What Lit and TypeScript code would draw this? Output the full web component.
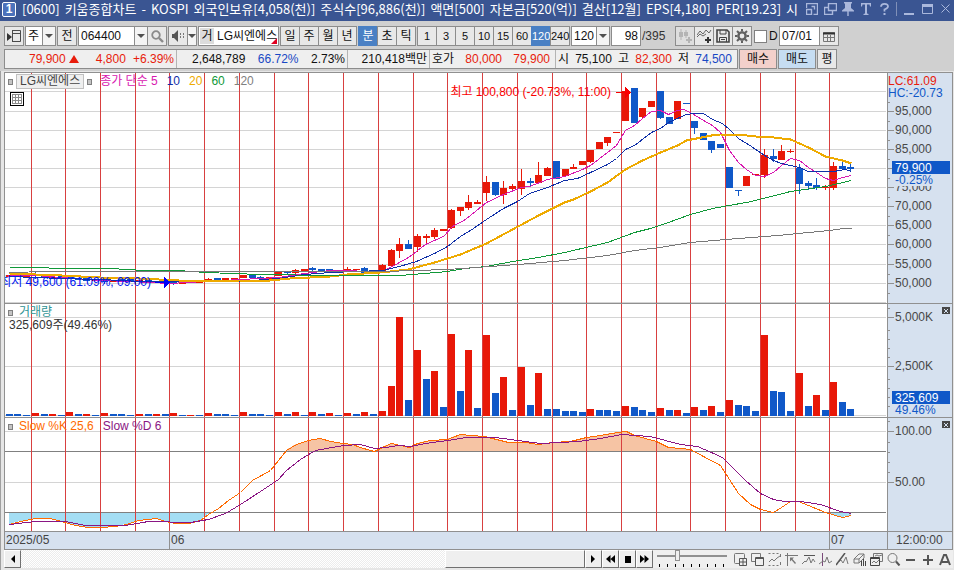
import { LitElement, html, css, svg, nothing } from "lit";
import { customElement, property, state } from "lit/decorators.js";
import { classMap } from "lit/directives/class-map.js";

/* ---------- chart data ---------- */

const DAY_LINES = [
  31, 65, 100, 135, 169, 204, 239, 274, 308, 343, 378, 413, 447, 482, 517, 552,
  586, 621, 656, 690, 725, 760, 795, 829,
];
const SLOTS = [4, 13, 21, 30];
const CENTERS = [-4, ...DAY_LINES]
  .flatMap((x) => SLOTS.map((s) => x + s))
  .slice(1);

type Side = "r" | "b";
type Candle = [Side, number, number, number?, number?];

// side, body top, body bottom, wick top, wick bottom
const CANDLES: Candle[] = [
  ["r", 275, 277], ["b", 274, 276], ["r", 275, 277],
  ["b", 274, 276, 271, 279], ["b", 275, 278], ["r", 277, 278], ["b", 276, 278],
  ["b", 277, 279], ["b", 278, 280], ["b", 278, 281], ["r", 279, 281],
  ["b", 278, 282, 277, 284], ["r", 280, 282], ["b", 279, 281], ["b", 279, 281],
  ["r", 280, 282], ["b", 280, 282], ["b", 281, 282], ["b", 281, 283],
  ["b", 282, 284, 281, 285], ["r", 282, 284], ["b", 282, 283], ["r", 281, 283],
  ["r", 279, 281, 278, 282], ["b", 278, 280], ["r", 278, 280], ["r", 278, 280],
  ["r", 275, 278], ["b", 275, 278], ["b", 277, 278, 276, 279], ["r", 277, 279],
  ["r", 272, 276, 271, 276], ["b", 272, 273, 271, 274], ["r", 270, 273, 269, 274], ["r", 269, 271],
  ["b", 268, 270, 267, 272], ["b", 269, 271], ["b", 269, 272], ["r", 270, 272],
  ["r", 269, 271, 267, 271], ["r", 269, 270], ["b", 268, 273, 267, 274], ["b", 272, 273],
  ["r", 265, 273, 264, 273], ["r", 250, 266, 249, 267], ["r", 244, 251, 238, 258], ["b", 244, 249, 240, 249],
  ["r", 236, 247, 234, 252], ["r", 236, 238, 234, 243], ["r", 230, 237, 228, 239], ["r", 229, 231],
  ["r", 210, 228, 209, 229], ["r", 207, 211, 207, 216], ["r", 202, 208, 195, 210], ["r", 202, 204, 200, 204],
  ["r", 182, 193, 176, 201], ["b", 182, 195, 182, 196], ["r", 188, 195, 181, 204], ["r", 186, 189, 184, 190],
  ["r", 181, 189, 169, 195], ["b", 181, 183, 178, 187], ["r", 175, 183, 162, 183], ["r", 168, 176, 167, 176],
  ["b", 161, 179], ["r", 169, 176], ["r", 167, 169, 164, 169], ["r", 161, 165],
  ["r", 150, 162, 150, 163], ["r", 142, 149], ["r", 137, 143, 137, 146], ["r", 132, 133],
  ["r", 91, 121], ["b", 88, 123], ["r", 108, 117, 108, 119], ["r", 101, 107],
  ["b", 91, 118, 91, 119], ["b", 117, 124], ["r", 101, 119], ["b", 103, 104],
  ["b", 121, 128, 121, 134], ["b", 133, 140], ["b", 141, 150, 141, 153], ["b", 144, 148],
  ["b", 167, 188], ["b", 190, 191, 190, 196], ["r", 176, 186], ["r", 174, 175],
  ["r", 155, 175, 149, 178], ["b", 156, 159, 149, 162], ["r", 151, 160, 145, 160], ["r", 151, 152, 149, 153],
  ["b", 168, 184, 164, 194], ["b", 183, 186, 181, 190], ["b", 185, 188, 178, 190], ["r", 187, 188, 185, 190],
  ["r", 166, 188, 162, 190], ["b", 166, 169, 159, 169], ["b", 167, 169, 163, 171],
];

// volume bars: side and top edge
const VOLUME = (
  "b414 b414 b415 r413 b414 r414 b415 r412 b414 r414 b415 r413 b414 b414 b415 " +
  "r414 b414 r414 b414 r413 b415 r415 b415 r413 b414 b414 b415 r412 b414 b414 b415 " +
  "r412 b414 r412 b415 r412 b414 r413 b415 r413 b414 r412 b414 r411 r386 r317 b400 " +
  "r350 b379 r371 b407 r334 b391 r350 b408 r335 b393 r377 b410 r367 b405 r373 b409 " +
  "b409 b411 b411 b412 r409 b410 b410 b411 r406 b407 b410 b412 r408 b410 r410 b413 " +
  "r407 b410 r406 b412 r400 b405 b406 b411 r335 b391 b392 b411 r373 b406 r395 b410 " +
  "r382 b402 b409"
).split(" ");

const MA5 =
  "9,275 35,275 61,277 100,280 130,281 169,283 204,281 239,279 260,278 278,277 304,273 330,270 382,271 399,262 408,257 425,244 434,240 443,236 452,226 465,219 486,202 503,194 521,187 529,186 547,179 564,176 582,169 590,165 607,152 616,145 625,130 634,125 642,118 651,111 660,110 668,114 677,110 683,109 690,112 703,120 712,125 720,132 729,150 738,162 746,169 755,175 764,176 773,172 781,165 790,158 799,160 808,167 816,172 825,178 833,180 842,177 851,175";
const MA10 =
  "9,276 61,278 100,279 140,281 170,281 239,281 278,278 304,274 330,272 382,270 399,266 416,261 434,253 447,246 460,236 473,228 486,219 503,208 517,201 529,193 547,187 564,180 577,178 590,172 607,164 616,158 625,149 634,145 651,132 660,128 668,122 677,118 686,114 694,113 703,113 712,119 722,123 729,129 738,138 751,146 764,155 773,160 781,163 799,167 808,171 833,171 845,169 851,171";
const MA20 =
  "9,273 35,274 61,275 100,277 139,278 178,280 204,281 239,280 269,280 290,278 310,277 330,276 347,274 380,272 408,269 434,262 460,254 486,243 512,229 538,215 564,202 573,199 590,191 607,182 625,169 642,160 660,152 677,145 686,140 711,135 720,134 738,134 755,136 773,137 790,139 808,147 825,156 842,160 851,163";
const MA60 =
  "9,267 48,267 49,268 118,268 119,269 152,270 178,270 205,272 260,274 330,275 400,275 447,271 464,268 486,266 512,261 538,257 564,252 607,242 634,232 650,228 668,222 690,214 712,208 751,201 790,191 825,186 851,180";
const MA120 =
  "9,272 48,271 240,271 382,271 447,269 490,266 530,263 564,260 607,255 634,250 660,247 690,242 725,239 777,235 829,230 843,228 851,228";
const SLOW_K =
  "9,524 20,521 35,518 50,518 61,521 75,525 88,527 100,527 115,526 126,524 138,520 156,518 165,521 175,523 188,523 200,520 208,514 218,508 228,500 240,492 252,480 270,470 286,450 296,444 308,440 320,438 330,441 343,443 352,444 360,447 370,450 374,451 382,447 391,443 400,445 409,447 417,443 430,440 447,439 460,434 470,435 484,436 492,438 508,442 525,442 538,444 552,442 570,441 586,437 600,435 617,432 626,431 634,435 656,441 668,447 680,448 690,449 703,456 720,465 729,479 738,493 750,504 760,509 773,512 781,507 790,501 798,501 808,505 825,512 842,517 851,515";
const SLOW_D =
  "9,524 35,521 65,521 85,525 125,525 148,521 190,522 208,519 225,513 240,504 260,491 278,479 286,470 300,459 315,450 343,445 360,444 374,448 385,447 398,445 410,446 425,443 447,440 466,437 495,437 525,441 540,443 578,441 600,438 621,434 650,436 680,444 697,446 711,452 722,457 730,465 745,480 760,493 773,499 784,501 800,501 820,504 840,511 851,513";

const PLOT_X = 5;
const PLOT_W = 882;
const AXIS_W = 65;

interface Label {
  y: number;
  text: string;
}
interface Panel {
  top: number;
  height: number;
  labels: Label[];
  minor: number[];
}

const PRICE: Panel = {
  top: 73,
  height: 230,
  labels: [95, 90, 85, 80, 75, 70, 65, 60, 55, 50].map((v, i) => ({
    y: [111, 130, 149, 168, 187, 206, 225, 244, 264, 283][i],
    text: v === 80 ? "" : `${v},000`,
  })),
  minor: [102, 121, 140, 159, 178, 197, 216, 235, 254, 274, 293],
};
const VOL: Panel = {
  top: 304,
  height: 113,
  labels: [{ y: 317, text: "5,000K" }, { y: 366, text: "2,500K" }],
  minor: [308, 330, 339, 348, 357, 379, 388, 397, 406],
};
const SLOW: Panel = {
  top: 418,
  height: 113,
  labels: [{ y: 431, text: "100.00" }, { y: 482, text: "50.00" }],
  minor: [421, 442, 452, 462, 472],
};

/* ---------- icons ---------- */

const icon = (w: number, h: number, body: unknown) =>
  html`<svg class="icon" width=${w} height=${h} viewBox="0 0 ${w} ${h}" fill="none" stroke="currentColor" aria-hidden="true">${body}</svg>`;

const I = {
  panel: icon(14, 14, svg`<path d="M5 1.500H13.500V12.500H5M5.500 1V13M5.500 4.500H13.500" stroke="#4a4a4a"/><path d="M0 4L5 8L0 12Z" fill="#333" stroke="none"/>`),
  search: icon(13, 13, svg`<circle cx="5" cy="5" r="3.800" stroke="#8a8a8a" stroke-width="1.800"/><path d="M8 8L12 12" stroke="#8a8a8a" stroke-width="2.400"/>`),
  speaker: icon(12, 12, svg`<path d="M0 4H2L6 0V12L2 8H0Z" fill="#555" stroke="none"/><path d="M8 4H9M11 4H12M8 7H9M11 7H12" stroke="#777" stroke-width="2"/>`),
  candles: icon(15, 14, svg`<path d="M3 0V11M8 1V9" stroke="#b4b4b4"/><path d="M1 3H5V8H1ZM6 3H10V7H6Z" fill="#b4b4b4" stroke="none"/><path d="M8 11H14M11 8V14" stroke="#b4b4b4" stroke-width="2"/>`),
  waves: icon(15, 14, svg`<path d="M0 6L3 2L6 5L9 1L12 4L14 1M0 8L3 5L6 7L9 5" stroke="#666"/><path d="M8 11H14M11 8V14" stroke="#333" stroke-width="2"/>`),
  disk: icon(14, 14, svg`<path d="M1 1H11L13 3V13H1Z" stroke="#444" stroke-width="1.600"/><path d="M4 1V5H10V1M3.500 13V8.500H10.500V13M5 10.500H9" stroke="#444"/>`),
  gear: icon(14, 14, svg`<circle cx="7" cy="7" r="3.600" stroke="#606060" stroke-width="2.400"/><path d="M7 0V2.500M7 11.500V14M0 7H2.500M11.500 7H14M2 2L4 4M10 10L12 12M2 12L4 10M10 4L12 2" stroke="#606060" stroke-width="2"/>`),
  calendar: icon(12, 11, svg`<path d="M.5 1.500H11.500V10.500H.5ZM.5 6.500H11.500M4.500 4V10M7.500 4V10" stroke="#777"/><path d="M0 2.500H12" stroke="#333" stroke-width="2"/>`),
  corner: icon(12, 12, svg`<path d="M.5 5V.5H11.500V11.500H7.500M.5 6.500H5.500V11.500H.5ZM5.500 3.500H8.500V6.500" stroke-width="1.400"/>`),
  windows: icon(13, 12, svg`<path d="M4.500 .5H12.500V7.500H4.500ZM4.500 4.500H.5V11.500H8.500V7.500" stroke-width="1.400"/>`),
  pin: icon(12, 14, svg`<path d="M2 0H10V1.500H9V6L12 8.500V9.500H0V8.500L3 6V1.500H2ZM5.300 9H6.700V14H5.300Z" fill="currentColor" stroke="none"/>`),
  tee: icon(10, 12, svg`<path d="M0 0H10V3.500H9L8.500 1.500H6V10.500L7.500 11V12H2.500V11L4 10.500V1.500H1.500L1 3.500H0Z" fill="currentColor" stroke="none"/>`),
  help: icon(9, 12, svg`<path d="M1 3.800Q1 .9 4.500 .9Q8 .9 8 3.500Q8 5.200 4.500 6.500V8.500" stroke-width="1.800"/><path d="M3.500 10H5.500V12H3.500Z" fill="currentColor" stroke="none"/>`),
  min: icon(10, 12, svg`<path d="M0 11H10" stroke-width="2"/>`),
  max: icon(11, 10, svg`<path d="M.5 .5H10.500V9.500H.5Z"/><path d="M0 1.500H11" stroke-width="3"/>`),
  close: icon(9, 10, svg`<path d="M.5 .5L8.500 8.500M8.500 .5L.5 8.500"/>`),
  left: icon(5, 8, svg`<path d="M5 0V8L1 4Z" fill="#000" stroke="none"/>`),
  right: icon(5, 8, svg`<path d="M0 0V8L4 4Z" fill="#000" stroke="none"/>`),
  back: icon(9, 8, svg`<path d="M4.500 0V8L0 4ZM9 0V8L4.500 4Z" fill="#000" stroke="none"/>`),
  stop: icon(6, 7, svg`<path d="M0 0H6V7H0Z" fill="#000" stroke="none"/>`),
  fwd: icon(9, 8, svg`<path d="M0 0V8L4.500 4ZM4.500 0V8L9 4Z" fill="#000" stroke="none"/>`),
  grid: icon(10, 10, svg`<path d="M.5 .5H9.500V9.500H.5ZM.5 3.500H9.500M.5 6.500H9.500M3.500 .5V9.500M6.500 .5V9.500" stroke="#8a8a8a"/>`),
};

const TOOLS: [string, unknown][] = [
  ["새 창 추가", svg`<path d="M5 10.500H1.500Q.5 10.500 .5 9.500V1.500Q.5 .5 1.500 .5H9.500Q10.500 .5 10.500 1.500V5"/><path d="M5.500 5.500H12.500V12.500H5.500ZM9 5.500V12.500M5.500 9H12.500" stroke="#555"/>`],
  ["창 겹치기", svg`<path d="M4.500 8.500H.5V.5H9.500V4"/><path d="M4.500 4.500H12.500V12.500H4.500ZM4.500 5.500H12.500" stroke="#555"/>`],
  ["영역 차트", svg`<path d="M.5 .5H12.500M.5 12.500H12.500" stroke-dasharray="2 2"/><path d="M1 9L4 6L6 8L9 5L12 3"/><path d="M12.500 1V4M12.500 9V12"/>`],
  ["선택 도구", svg`<path d="M0 2.500H13M2.500 0V13"/><path d="M5 4.500H9L7.500 6L11 10L10 11L6.500 7L5 8.500Z" fill="currentColor" stroke="none"/>`],
  ["수평선", svg`<path d="M2 2.500H13" stroke="#555"/><path d="M0 11L3 8L4 9L7 4L9 10L11 6L13 9"/>`],
  ["수직선", svg`<path d="M3.500 0V13" stroke="#7a4a7a"/><path d="M0 11L4 8L6 9L8 4L10 10L13 8"/>`],
  ["추세선", svg`<path d="M0 12L9 0" stroke="#555" stroke-width="1.500"/><path d="M2 10L5 7L7 10L10 4L12 11"/>`],
  ["지우개", svg`<path d="M1 6L6 1H11L6 6ZM1 6V10H6V6M6 10L11 5V1"/><path d="M8.500 8V13M10.500 6V13M12.500 8V13" stroke="#444"/>`],
  ["다중 차트", svg`<path d="M3.500 4V.5H12.500V8.500H10"/><path d="M.5 4.500H9.500V12.500H.5ZM.5 5.500H9.500" stroke="#444"/><path d="M2 10L4 8L6 10L9 7M5 3L7 2L9 3L12 2"/>`],
  ["돋보기", svg`<circle cx="5.500" cy="5" r="4.500"/><path d="M9 8.500L12.500 12.500" stroke="#555" stroke-width="2"/>`],
  ["축소", svg`<path d="M2 7H11" stroke="#555" stroke-width="2"/>`],
  ["확대", svg`<path d="M2 7H12M7 2V12" stroke="#555" stroke-width="2"/>`],
  ["글자", svg`<path d="M2 12L6 2H8L12 12M4 9H10" stroke="#555" stroke-width="2"/>`],
];

/* ---------- plot ---------- */

@customElement("stock-chart")
export class StockChart extends LitElement {
  static styles = css`
    :host { display: block; border: 1px solid #909090; background: #fff; color: #444; }
    .row { display: flex; border-bottom: 1px solid #909090; }
    .row:last-child { border-bottom: 0; }
    .plot { position: relative; flex: 1; min-width: 0; overflow: hidden; }
    .plot svg, .axis svg { display: block; shape-rendering: crispEdges; }
    .plot > svg { width: 100%; }
    .axis { position: relative; flex: none; width: 65px; background: #d6e1ef; }
    .axis text { font-size: 12px; fill: #484848; }
    .axis .lead { fill: #fff; }
    .axis .up { fill: #e81c0c; }
    .axis .down { fill: #1058c8; }
    .legend { position: absolute; left: 3px; top: 1px; display: flex; align-items: center; gap: 6px; height: 15px; line-height: 15px; white-space: nowrap; }
    .box { width: 5px; height: 6px; box-sizing: border-box; border: 1px solid #808080; background: #c4c4c4; }
    .chip { border: 1px solid #c0c0c0; background: #efefef; padding: 0 3px; line-height: 13px; margin: 0 -3px; }
    .mas { display: flex; gap: 9px; padding-left: 2px; }
    .ma5 { color: #d818b0; }
    .ma10 { color: #1030a8; }
    .ma20 { color: #eeaa00; }
    .ma60 { color: #109838; }
    .ma120 { color: #808080; }
    .vol { color: #2e9494; }
    .k { color: #ff6a00; }
    .d { color: #8a1684; padding-left: 3px; }
    .amount { position: absolute; left: 4px; top: 14px; line-height: 15px; color: #333; }
    .note { position: absolute; line-height: 14px; white-space: nowrap; }
    .note.high { top: 12px; color: #fa0000; }
    .note.low { top: 202px; color: #0018f0; }
    .gridbtn { position: absolute; left: 5px; top: 19px; width: 14px; height: 14px; padding: 0; border: 1px solid #000; background: #fff; display: grid; place-items: center; }
    .shut { position: absolute; right: 2px; top: 3px; width: 8px; height: 7px; padding: 0; border: 0; background: #484848; color: #d6e1ef; display: grid; place-items: center; }
    .time { background: #d6e1ef; height: 17px; line-height: 16px; font-size: 12px; }
    .month { position: absolute; top: 0; height: 17px; padding-left: 1px; border-left: 1px solid #909090; }
    .month.first { border-left: 0; }
    .clock { border-left: 1px solid #909090; box-sizing: border-box; padding-left: 8px; }
  `;

  private frame(p: Panel, body: unknown) {
    return html`<svg
      height=${p.height}
      viewBox="${PLOT_X} ${p.top} ${PLOT_W} ${p.height}"
      preserveAspectRatio="none"
      aria-hidden="true"
    >${body}</svg>`;
  }

  private hlines(ys: number[], color = "#d4d4d4") {
    return ys.map((y) => svg`<rect x="5" y=${y} width="881" height="1" fill=${color}></rect>`);
  }

  private days(p: Panel) {
    return DAY_LINES.map((x) => svg`<rect x=${x} y=${p.top} width="1" height=${p.height} fill="#d84040"></rect>`);
  }

  private line(points: string, color: string, width = 1) {
    return svg`<polyline points=${points} transform="translate(.5 .5)" fill="none" stroke=${color} stroke-width=${width}></polyline>`;
  }

  private fill(side: string) {
    return side === "r" ? "#e81808" : "#1058c8";
  }

  private axis(p: Panel, extra: unknown, closable = true) {
    return html`<div class="axis">
      <svg width=${AXIS_W} height=${p.height} viewBox="887 ${p.top} ${AXIS_W} ${p.height}">
        <rect x="887" y=${p.top} width="1" height=${p.height} fill="#909090"></rect>
        ${p.minor.map((y) => svg`<rect x="888" y=${y} width="2" height="1" fill="#909090"></rect>`)}
        ${p.labels.map((l) => svg`
          <rect x="888" y=${l.y} width="6" height="1" fill="#909090"></rect>
          <text x="895" y=${l.y + 4}>${l.text}</text>`)}
        ${extra}
      </svg>
      ${closable
        ? html`<button class="shut" aria-label="닫기"><svg width="4" height="4" viewBox="0 0 4 4" stroke="currentColor"><path d="M0 0L4 4M4 0L0 4"></path></svg></button>`
        : nothing}
    </div>`;
  }

  private rightOf(x: number) {
    return `right:${((PLOT_X + PLOT_W - x) / PLOT_W) * 100}%`;
  }
  private leftOf(x: number) {
    return `left:${((x - PLOT_X) / PLOT_W) * 100}%`;
  }

  render() {
    return html`
      <div class="row">
        <div class="plot">
          ${this.frame(PRICE, svg`
            ${this.hlines([91, 111, 130, 149, 168, 187, 206, 225, 244, 264, 283, 302])}
            ${this.days(PRICE)}
            ${CANDLES.map(([s, t, b, wt, wb], i) => svg`
              <rect x=${CENTERS[i] - 3} y=${t} width="7" height=${b - t} fill=${this.fill(s)}></rect>
              ${wt === undefined ? nothing : svg`<rect x=${CENTERS[i]} y=${wt} width="1" height=${wb! - wt} fill=${this.fill(s)}></rect>`}`)}
            ${this.line(MA5, "#d818b0")}
            ${this.line(MA10, "#1030a8")}
            ${this.line(MA20, "#eeaa00", 2)}
            ${this.line(MA60, "#109838")}
            ${this.line(MA120, "#787878")}
            <path d="M616 92H625V87L631 92.500L625 98V93H616Z" fill="#fa0000"></path>
            <path d="M155 282H164V277L170 282.500L164 288V283H155Z" fill="#0000f8"></path>`)}
          <div class="legend">
            <span class="box"></span><span class="chip">LG씨엔에스</span><span class="box"></span>
            <span class="mas">
              <span class="ma5">종가 단순 5</span><span class="ma10">10</span><span class="ma20">20</span><span class="ma60">60</span><span class="ma120">120</span>
            </span>
          </div>
          <button class="gridbtn" aria-label="데이터 표">${I.grid}</button>
          <span class="note high" style=${this.rightOf(611)}>최고 100,800 (-20.73%, 11:00)</span>
          <span class="note low" style=${this.rightOf(151)}>최저 49,600 (61.09%, 09:00)</span>
        </div>
        ${this.axis(PRICE, svg`
          <text class="up" x="888" y="85">LC:61.09</text>
          <text class="down" x="888" y="97">HC:-20.73</text>
          <rect x="892" y="161" width="58" height="13" fill="#1058c8"></rect>
          <text class="lead" x="895" y="172">79,900</text>
          <rect x="894" y="174" width="56" height="12" fill="#d6e1ef"></rect>
          <text class="down" x="895" y="184">-0.25%</text>`, false)}
      </div>
      <div class="row">
        <div class="plot">
          ${this.frame(VOL, svg`
            ${this.hlines([317, 366, 415])}
            ${this.days(VOL)}
            ${VOLUME.map((v, i) => {
              const top = Number(v.slice(1));
              return svg`<rect x=${CENTERS[i] - 3} y=${top} width="7" height=${416 - top} fill=${this.fill(v[0])}></rect>`;
            })}`)}
          <div class="legend"><span class="box"></span><span class="vol">거래량</span></div>
          <span class="amount">325,609주(49.46%)</span>
        </div>
        ${this.axis(VOL, svg`
          <rect x="892" y="391" width="58" height="13" fill="#1058c8"></rect>
          <text class="lead" x="895" y="402">325,609</text>
          <text class="down" x="895" y="414">49.46%</text>`)}
      </div>
      <div class="row">
        <div class="plot">
          ${this.frame(SLOW, svg`
            <clipPath id="over"><rect x="5" y="418" width="882" height="33"></rect></clipPath>
            <clipPath id="under"><rect x="5" y="513" width="882" height="18"></rect></clipPath>
            ${this.hlines([431, 482])}
            <polygon points="9,451 ${SLOW_K} 851,451" fill="#f6c4a4" clip-path="url(#over)"></polygon>
            <polygon points="9,513 ${SLOW_K} 851,513" fill="#a4def4" clip-path="url(#under)"></polygon>
            ${this.hlines([451, 512], "#808080")}
            ${this.days(SLOW)}
            ${this.line(SLOW_K, "#ff6a00")}
            ${this.line(SLOW_D, "#8a1684")}`)}
          <div class="legend"><span class="box"></span><span class="k">Slow %K 25,6</span><span class="d">Slow %D 6</span></div>
        </div>
        ${this.axis(SLOW, nothing)}
      </div>
      <div class="row time">
        <div class="plot">
          <span class="month first" style=${this.leftOf(5)}>2025/05</span>
          <span class="month" style=${this.leftOf(169)}>06</span>
          <span class="month" style=${this.leftOf(829)}>07</span>
        </div>
        <div class="axis clock">12:00:00</div>
      </div>
    `;
  }
}

/* ---------- window ---------- */

@customElement("app-root")
export class AppRoot extends LitElement {
  @property() code = "064400";
  @state() private unit = "분";
  @state() private minutes = "120";

  static styles = css`
    :host { display: flex; flex-direction: column; min-height: 100vh; box-sizing: border-box; background: #d0d0d0; color: #111; font: 12px/14px "Liberation Sans", "Noto Sans CJK KR", sans-serif; }
    * { box-sizing: border-box; }
    button, input, select { font: inherit; color: inherit; border-radius: 0; margin: 0; }
    button { display: grid; place-items: center; padding: 0; border: 1px solid #8c8c8c; background: #e8e8e8; white-space: nowrap; line-height: 16px; }
    .icon { display: block; }
    .title { display: flex; align-items: center; height: 21px; padding: 0 0 3px 2px; background: #3a5592; color: #fff; }
    .badge { flex: none; width: 14px; height: 15px; margin-right: 6px; border: 1px solid #fff; border-radius: 2px; background: #4c72bc; display: grid; place-items: center; font-weight: bold; line-height: 12px; }
    .caption { flex: 1; min-width: 0; display: flex; gap: 5px; overflow: hidden; white-space: nowrap; font: 13px/18px "Noto Sans CJK KR", sans-serif; margin: 0; }
    .sys { flex: none; display: flex; align-items: center; color: #aab8dc; }
    .sys button { width: 18px; height: 18px; border: 0; background: none; }
    .sep { width: 1px; height: 14px; margin: 0 3px; background: #8090b8; }
    .tools { display: flex; gap: 1px; padding: 5px 4px 3px; height: 28px; }
    .tools > * { flex: none; }
    .group { display: flex; height: 20px; }
    .group button { width: 20px; height: 20px; }
    .group > * + * { margin-left: -1px; }
    .minutes { font-size: 11px; }
    .tools .on { background: #4a80c4; border-color: #4a80c4; color: #fff; }
    .sq { width: 20px; height: 20px; }
    .group .dim { background: #dedede; }
    .arrow::before { content: ""; border: 4px solid transparent; border-top: 4px solid #505050; border-bottom: 0; }
    .group .arrow { width: 14px; background: #f4f4f4; }
    .group .slim { width: 10px; }
    .field { height: 20px; border: 1px solid #8c8c8c; background: #fff; padding: 0 2px; }
    select.field { appearance: none; }
    .w-unit { width: 18px; }
    .w-code { width: 57px; }
    .w-min { width: 26px; }
    .w-pos { width: 30px; text-align: right; }
    .w-date { width: 41px; }
    .stock { position: relative; display: flex; align-items: center; gap: 3px; width: 81px; height: 20px; border: 1px solid #8c8c8c; background: #fff; padding-left: 1px; white-space: nowrap; overflow: hidden; }
    .stock::after { content: ""; position: absolute; right: 1px; bottom: 1px; border: 3px solid #e00020; border-top-color: transparent; border-left-color: transparent; }
    .tag { width: 14px; background: #dcdcdc; line-height: 16px; text-align: center; }
    .total { width: 32px; line-height: 20px; color: #333; }
    .check { display: flex; align-items: center; gap: 2px; height: 20px; width: 25px; padding-left: 1px; }
    .check input { appearance: none; flex: none; width: 13px; height: 13px; border: 1px solid #808080; background: #fff; }
    .quote { display: flex; gap: 1px; padding: 0 4px; height: 20px; }
    .cells { display: flex; width: 734px; border: 1px solid #8c8c8c; background: #efefef; line-height: 18px; white-space: nowrap; }
    .cell { display: flex; justify-content: space-between; align-items: center; border-right: 1px solid #b4b4b4; padding: 0 2px; }
    .cell:last-child { border-right: 0; }
    .c1 { width: 172px; padding-left: 24px; gap: 2px; }
    .c2 { width: 171px; padding-left: 15px; }
    .c3 { width: 82px; justify-content: flex-end; }
    .c4 { width: 126px; padding-right: 5px; }
    .c5 { flex: 1; padding-right: 5px; }
    .up { color: #e81c0c; }
    .down { color: #1848c4; }
    .tri { width: 0; height: 0; border: 5px solid transparent; border-top: 0; border-bottom: 8px solid #e81c0c; margin-right: 10px; }
    .price { display: flex; align-items: center; gap: 3px; }
    .quote button { width: 38px; height: 20px; }
    .quote .buy { background: #f3d0cb; }
    .quote .sell { background: #c6ddf2; }
    .quote .avg { width: 20px; }
    .body { flex: 1; display: flex; flex-direction: column; margin-top: 2px; padding: 1px 1px 0 4px; background: #e6e6e6; box-shadow: inset 1px 0 #a0a0a0; }
    .foot { display: flex; height: 18px; background: #efefef; }
    .foot button { border: 1px solid; border-color: #fff #707070 #707070 #fff; background: #efefef; height: 18px; width: 17px; flex: none; }
    .track { flex: 1; display: flex; justify-content: flex-end; background: repeating-conic-gradient(#fff 0 25%, #ececec 0 50%) 0 0 / 2px 2px; }
    .thumb { width: 140px; border: 1px solid; border-color: #fff #707070 #707070 #fff; background: #efefef; }
    .zoom { appearance: none; flex: none; width: 70px; height: 17px; margin: 0 5px 0 4px; background:
      linear-gradient(#909090, #909090) 0 5px / 100% 2px no-repeat,
      repeating-linear-gradient(90deg, #000 0 1px, transparent 1px 8px) 2px 14px / 67px 3px no-repeat; }
    .zoom::-webkit-slider-thumb { appearance: none; width: 5px; height: 11px; margin-top: -6px; border: 1px solid #909090; background: #efefef; }
    .set { display: flex; flex: none; color: #777; }
    .set button { border: 0; background: none; width: 17px; }
    .base { height: 3px; }
  `;

  private btn(label: string, glyph: unknown, cls = "") {
    return html`<button class=${cls} aria-label=${label}>${glyph}</button>`;
  }

  render() {
    const caption = [
      "[0600]", "키움종합차트", "-", "KOSPI", "외국인보유[4,058(천)]", "주식수[96,886(천)]",
      "액면[500]", "자본금[520(억)]", "결산[12월]", "EPS[4,180]", "PER[19.23]", "시",
    ];
    return html`
      <header class="title">
        <span class="badge">1</span>
        <h1 class="caption">${caption.map((c) => html`<span>${c}</span>`)}</h1>
        <div class="sys">
          ${this.btn("축소 보기", I.corner)}${this.btn("창 복제", I.windows)}${this.btn("고정", I.pin)}${this.btn("글꼴", I.tee)}${this.btn("도움말", I.help)}
          <span class="sep"></span>
          ${this.btn("최소화", I.min)}${this.btn("최대화", I.max)}${this.btn("닫기", I.close)}
        </div>
      </header>

      <div class="tools">
        ${this.btn("패널", I.panel, "sq")}
        <div class="group">
          <select class="field w-unit" aria-label="종목 구분"><option>주</option></select>
          ${this.btn("구분 목록", nothing, "arrow")}
        </div>
        <button class="sq">전</button>
        <div class="group">
          <input class="field w-code" aria-label="종목 코드" .value=${this.code} />
          ${this.btn("종목 목록", nothing, "arrow")}${this.btn("종목 검색", I.search)}
        </div>
        <div class="group">${this.btn("소리", I.speaker)}${this.btn("소리 목록", nothing, "arrow slim")}</div>
        <div class="stock"><span class="tag">거</span><span>LG씨엔에스</span></div>
        <div class="group">
          ${["일", "주", "월", "년"].map((u) => html`<button @click=${() => (this.unit = u)} class=${classMap({ on: this.unit === u })}>${u}</button>`)}
        </div>
        <div class="group">
          ${["분", "초", "틱"].map((u) => html`<button @click=${() => (this.unit = u)} class=${classMap({ on: this.unit === u })}>${u}</button>`)}
        </div>
        <div class="group minutes">
          ${["1", "3", "5", "10", "15", "60", "120", "240"].map((m) => html`<button @click=${() => (this.minutes = m)} class=${classMap({ on: this.minutes === m })}>${m}</button>`)}
        </div>
        <div class="group">
          <select class="field w-min" aria-label="분 주기"><option>120</option></select>
          ${this.btn("주기 목록", nothing, "arrow")}
        </div>
        <input class="field w-pos" aria-label="표시 개수" value="98" />
        <span class="total">/395</span>
        <div class="group">
          ${this.btn("종목 추가", I.candles, "dim")}${this.btn("지표 추가", I.waves)}${this.btn("저장", I.disk)}${this.btn("설정", I.gear)}
        </div>
        <label class="check"><input type="checkbox" />D</label>
        <div class="group">
          <input class="field w-date" aria-label="날짜" value="07/01" />
          ${this.btn("달력", I.calendar)}
        </div>
      </div>

      <div class="quote">
        <div class="cells">
          <div class="cell c1 up"><span class="price">79,900 <i class="tri"></i></span><span>4,800</span><span>+6.39%</span></div>
          <div class="cell c2"><span>2,648,789</span><span class="down">66.72%</span><span>2.73%</span></div>
          <div class="cell c3">210,418백만</div>
          <div class="cell c4"><span>호가</span><span class="up">80,000</span><span class="up">79,900</span></div>
          <div class="cell c5"><span>시</span><span>75,100</span><span>고</span><span class="up">82,300</span><span>저</span><span class="down">74,500</span></div>
        </div>
        <button class="buy">매수</button><button class="sell">매도</button><button class="avg">평</button>
      </div>

      <main class="body">
        <stock-chart></stock-chart>
        <div class="foot">
          ${this.btn("이전", I.left)}
          <div class="track"><div class="thumb"></div></div>
          ${this.btn("다음", I.right)}${this.btn("뒤로", I.back)}${this.btn("정지", I.stop)}${this.btn("앞으로", I.fwd)}
          <input class="zoom" type="range" aria-label="재생 속도" min="0" max="100" value="28" />
          <div class="set">${TOOLS.map(([label, g]) => this.btn(label, icon(14, 13, g)))}</div>
        </div>
        <div class="base"></div>
      </main>
    `;
  }
}
